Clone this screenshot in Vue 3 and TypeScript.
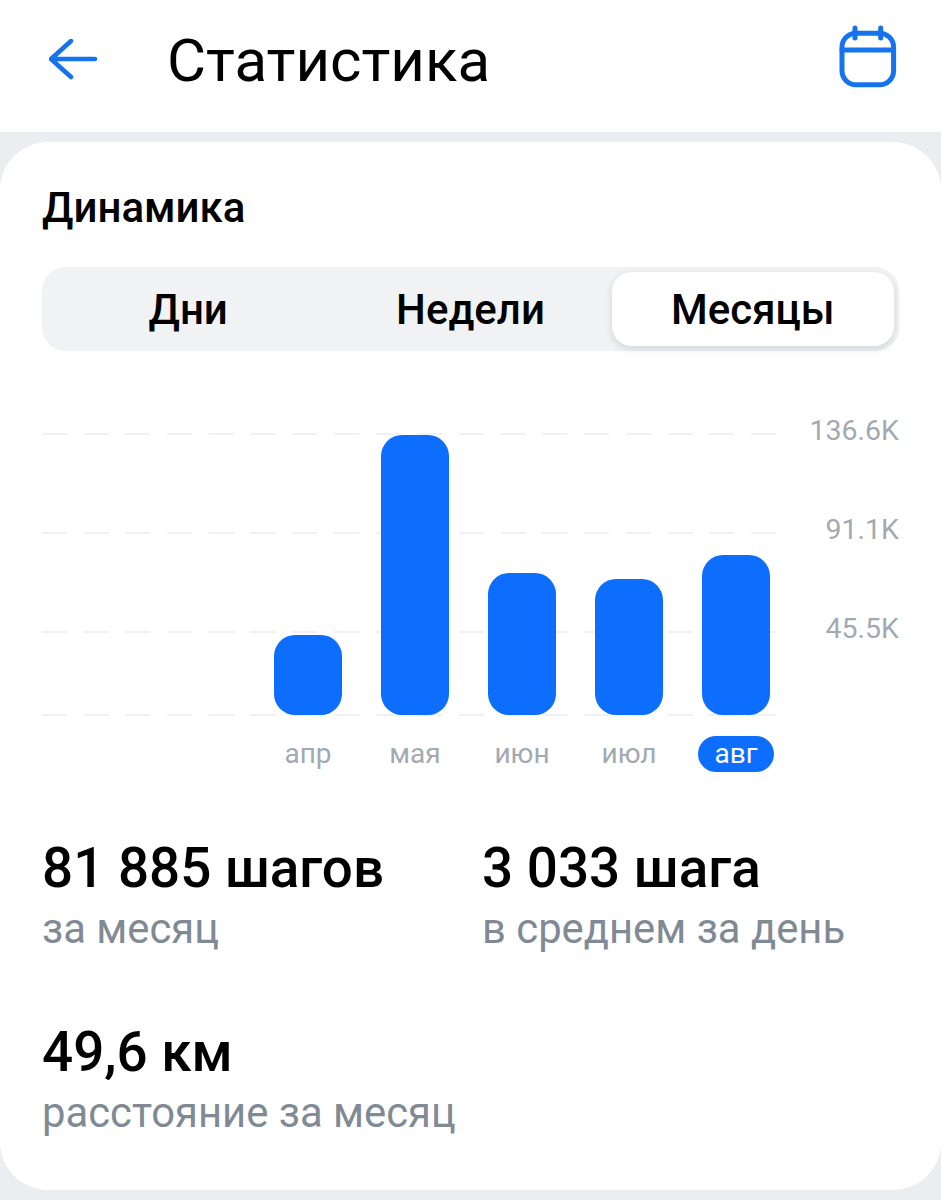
<script setup lang="ts">
interface Bar {
  label: string
  height: number
  active?: boolean
}

const bars: Bar[] = [
  { label: 'апр', height: 80 },
  { label: 'мая', height: 280 },
  { label: 'июн', height: 142 },
  { label: 'июл', height: 136 },
  { label: 'авг', height: 160, active: true },
]

const ticks = ['136.6K', '91.1K', '45.5K']
const tabs = ['Дни', 'Недели', 'Месяцы']

const stats = [
  { value: '81 885 шагов', caption: 'за месяц' },
  { value: '3 033 шага', caption: 'в среднем за день' },
  { value: '49,6 км', caption: 'расстояние за месяц' },
]
</script>

<template>
  <main class="page">
    <header class="topbar">
      <svg class="back" viewBox="0 0 50 44" aria-hidden="true">
        <path d="M22 2 2 20l20 18M2 20h44" />
      </svg>
      <h1 class="title">Статистика</h1>
      <svg class="calendar" viewBox="0 0 58 64" aria-hidden="true">
        <rect x="3" y="8.2" width="51.6" height="51.6" rx="14" />
        <path d="M3 25h51.6M16 3v10M41.7 3v10" />
      </svg>
    </header>

    <section class="card">
      <h2 class="heading">Динамика</h2>

      <div class="tabs">
        <button
          v-for="(tab, i) in tabs"
          :key="tab"
          :class="['tab', { 'tab--on': i === 2 }]"
          type="button"
        >
          {{ tab }}
        </button>
      </div>

      <div class="chart">
        <div class="plot">
          <div class="lines">
            <i class="line" />
            <i class="line" />
            <i class="line" />
            <i class="line" />
          </div>
          <div class="bars">
            <div
              v-for="bar in bars"
              :key="bar.label"
              class="bar"
              :style="{ height: bar.height + 'px' }"
            />
          </div>
        </div>
        <div class="ticks">
          <span v-for="tick in ticks" :key="tick" class="tick">{{ tick }}</span>
        </div>
        <div class="labels">
          <span
            v-for="bar in bars"
            :key="bar.label"
            :class="['label', { 'label--on': bar.active }]"
          >{{ bar.label }}</span>
        </div>
      </div>

      <div class="stats">
        <div v-for="stat in stats" :key="stat.value" class="stat">
          <div class="value">{{ stat.value }}</div>
          <div class="caption">{{ stat.caption }}</div>
        </div>
      </div>
    </section>
  </main>
</template>

<style>
html,
body {
  background: #ebedf0;
}
</style>

<style scoped>
.page {
  width: 941px;
  height: 1200px;
  overflow: hidden;
  background: #ebedf0;
  font-family: Roboto, 'Noto Sans', sans-serif;
  color: #000;
}

.topbar {
  height: 132px;
  box-sizing: border-box;
  padding: 25px 44px 0 49px;
  background: #fff;
  display: flex;
  align-items: flex-start;
}

.back {
  width: 50px;
  height: 44px;
  margin-top: 14px;
  flex: none;
  fill: none;
  stroke: #1573ee;
  stroke-width: 4.6;
  stroke-linecap: round;
  stroke-linejoin: round;
}

.title {
  margin: 0 0 0 68px;
  flex: 1;
  font-size: 60px;
  line-height: 72px;
  font-weight: 400;
}

.calendar {
  width: 58px;
  height: 64px;
  flex: none;
  fill: none;
  stroke: #1573ee;
  stroke-width: 5;
  stroke-linecap: round;
}

.card {
  margin-top: 10px;
  height: 1048px;
  box-sizing: border-box;
  padding: 42px 42px 0;
  background: #fff;
  border-radius: 48px;
}

.heading {
  margin: 0;
  font-size: 42px;
  line-height: 48px;
  font-weight: 500;
}

.tabs {
  margin-top: 35px;
  height: 84px;
  box-sizing: border-box;
  padding: 5px;
  border-radius: 24px;
  background: #f1f2f4;
  display: grid;
  grid-template-columns: repeat(3, 1fr);
}

.tab {
  border: 0;
  padding: 0;
  border-radius: 20px;
  background: transparent;
  color: #000;
  font: 500 42px Roboto, 'Noto Sans', sans-serif;
}

.tab--on {
  background: #fff;
  box-shadow: 0 3px 8px rgba(0, 0, 0, 0.12);
}

.chart {
  margin-top: 82px;
  display: grid;
  grid-template-columns: 736px 121px;
  grid-template-rows: 282px auto;
}

.plot {
  display: grid;
}

.lines,
.bars {
  grid-area: 1 / 1;
}

.lines {
  display: flex;
  flex-direction: column;
}

.line {
  display: block;
  height: 2px;
  margin-bottom: 97px;
  background: repeating-linear-gradient(90deg, #f0f1f3 0 25px, transparent 25px 41.7px);
}

.line:nth-child(3) {
  margin-bottom: 81px;
}

.line:nth-child(4) {
  margin-bottom: 0;
}

.bars {
  display: flex;
  align-items: flex-end;
  justify-content: flex-end;
  gap: 39px;
  padding: 0 8px 1px 0;
}

.bar {
  width: 68px;
  border-radius: 21px;
  background: #0d6efd;
}

.ticks {
  display: flex;
  flex-direction: column;
  align-items: flex-end;
  gap: 67px;
  margin-top: -18px;
}

.tick {
  height: 32px;
  font-size: 28.5px;
  line-height: 32px;
  color: #a3a9b0;
}

.labels {
  grid-column: 1;
  display: flex;
  justify-content: flex-end;
  gap: 31px;
  padding-right: 4px;
  margin-top: 21px;
}

.label {
  width: 76px;
  height: 36px;
  text-align: center;
  font-size: 28px;
  line-height: 36px;
  color: #a3a9b0;
}

.label--on {
  border-radius: 18px;
  background: #0d6efd;
  color: #fff;
}

.stats {
  margin-top: 66px;
  display: grid;
  grid-template-columns: 440px 1fr;
  row-gap: 63px;
}

.value {
  font-size: 54.8px;
  line-height: 60px;
  font-weight: 500;
}

.caption {
  margin-top: 1px;
  font-size: 41.8px;
  line-height: 60px;
  color: #808a94;
}
</style>
